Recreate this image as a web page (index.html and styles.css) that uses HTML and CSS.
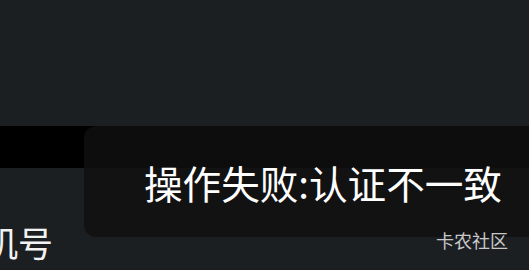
FILE: index.html
```html
<!DOCTYPE html>
<html lang="zh-CN">
<head>
<meta charset="utf-8">
<link rel="stylesheet" href="styles.css">
</head>
<body>
<div class="page">
  <div class="top"></div>
  <div class="band"></div>
  <div class="content">
    <div class="label">手机号</div>
  </div>
  <div class="toast">
    <span class="toast-text">操作失败:认证不一致</span>
  </div>
  <div class="watermark">卡农社区</div>
</div>
</body>
</html>
```
FILE: styles.css
```css
html, body {
  margin: 0;
  padding: 0;
  background: #1c1f22;
  overflow: hidden;
}
.page {
  position: relative;
  width: 529px;
  height: 270px;
  overflow: hidden;
  font-family: "Noto Sans CJK SC", "Noto Sans", sans-serif;
}
.top {
  height: 126px;
  background: #1c1f22;
}
.band {
  height: 42px;
  background: #000;
}
.content {
  padding-top: 54px;
}
.label {
  margin-left: -52px;
  font-size: 35px;
  line-height: 40px;
  color: #f2f2f2;
  white-space: nowrap;
}
.toast {
  position: absolute;
  left: 84px;
  top: 126px;
  width: 520px;
  height: 111px;
  border-radius: 12px;
  background: rgba(16, 16, 16, 0.82);
  display: flex;
  align-items: center;
  padding-left: 60px;
  padding-top: 2px;
  box-sizing: border-box;
}
.toast-text {
  font-size: 38.6px;
  color: #fff;
  white-space: nowrap;
  line-height: 1;
}
.watermark {
  position: absolute;
  left: 436px;
  top: 229px;
  font-size: 18px;
  line-height: 22px;
  color: #c9c9c9;
  white-space: nowrap;
}
```
